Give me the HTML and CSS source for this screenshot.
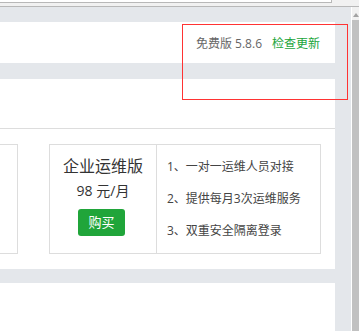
FILE: index.html
```html
<!DOCTYPE html>
<html lang="zh-CN">
<head>
    <meta charset="UTF-8">
    <meta name="viewport" content="width=device-width, initial-scale=1.0">
    <title>软件商店</title>
    <link rel="stylesheet" href="styles.css">
</head>
<body>
    <div class="chrome"><div class="address"></div></div>

    <div class="window">
        <div class="page">
            <div class="panel-head">
                <span class="version">免费版 5.8.6</span>
                <a class="check-update" href="#">检查更新</a>
            </div>

            <div class="panel-plans">
                <div class="plans-title"></div>
                <div class="plans-row">
                    <!-- previous plan, scrolled out of view -->
                    <div class="plan plan-prev"></div>
                    <div class="plan">
                        <div class="plan-info">
                            <div class="plan-name">企业运维版</div>
                            <div class="plan-price">98 元/月</div>
                            <a class="buy-btn" href="#">购买</a>
                        </div>
                        <ul class="plan-list">
                            <li>1、一对一运维人员对接</li>
                            <li>2、提供每月3次运维服务</li>
                            <li>3、双重安全隔离登录</li>
                        </ul>
                    </div>
                </div>
            </div>

            <div class="panel-foot"></div>
        </div>

        <div class="scrollbar">
            <div class="scroll-up"></div>
            <div class="scroll-thumb"></div>
        </div>
    </div>

    <!-- highlight box drawn over the version area -->
    <div class="mark"></div>
</body>
</html>
```

FILE: styles.css
```css
body {
    margin: 0;
    padding: 0;
    height: 331px;
    overflow: hidden;
    font-family: 'Open Sans', 'Noto Sans CJK SC', sans-serif;
    background-color: #e4e7eb;
    color: #333;
}

.chrome {
    height: 7px;
    background-color: #f1f1f1;
    border-bottom: 1px solid #b8b8b8;
    box-sizing: border-box;
}

.address {
    width: 331px;
    height: 2px;
    border-bottom: 1px solid #b8b8b8;
    border-right: 1px solid #b8b8b8;
    background-color: #fff;
}

.window {
    display: flex;
    height: 324px;
}

.page {
    width: 336px;
    padding-top: 15px;
    display: flex;
    flex-direction: column;
}

.panel-head {
    height: 41px;
    background-color: #fff;
    display: flex;
    justify-content: flex-end;
    align-items: center;
    padding-right: 15px;
    font-size: 12px;
}

.version {
    color: #666;
}

.check-update {
    color: #20a53a;
    text-decoration: none;
    margin-left: 10px;
}

.panel-plans {
    margin-top: 16px;
    background-color: #fff;
}

.plans-title {
    height: 49px;
    border-bottom: 1px solid #ddd;
}

.plans-row {
    display: flex;
    gap: 31px;
    padding: 15px 0 15px 0;
}

.plan {
    display: flex;
    flex-shrink: 0;
    width: 272px;
    height: 110px;
    box-sizing: border-box;
    border: 1px solid #ddd;
}

.plan-prev {
    margin-left: -254px;
}

.plan-info {
    width: 107px;
    flex-shrink: 0;
    box-sizing: border-box;
    border-right: 1px solid #ddd;
    text-align: center;
    padding-top: 9px;
}

.plan-name {
    font-size: 16px;
    line-height: 24px;
}

.plan-price {
    font-size: 14px;
    line-height: 26px;
}

.buy-btn {
    display: inline-block;
    margin-top: 5px;
    margin-right: 3px;
    width: 47px;
    height: 27px;
    line-height: 27px;
    border-radius: 3px;
    background-color: #20a53a;
    color: #fff;
    font-size: 13px;
    text-decoration: none;
}

.plan-list {
    list-style: none;
    margin: 0;
    padding: 6px 0 0 10px;
    font-size: 12px;
    line-height: 32px;
    color: #444;
}

.panel-foot {
    flex: 1;
    margin-top: 14px;
    background-color: #fff;
}

.scrollbar {
    margin-left: 16px;
    width: 7px;
    border-left: 1px solid #fff;
    display: flex;
    flex-direction: column;
}

.scroll-up {
    height: 13px;
    background-color: #f1f1f1;
    position: relative;
}

.scroll-up::after {
    content: '';
    position: absolute;
    left: 1px;
    top: 6px;
    border-left: 3px solid transparent;
    border-right: 3px solid transparent;
    border-bottom: 4px solid #a3a3a3;
}

.scroll-thumb {
    flex: 1;
    background-color: #c1c1c1;
}

.mark {
    position: absolute;
    left: 182px;
    top: 24px;
    width: 166px;
    height: 76px;
    box-sizing: border-box;
    border: 1px solid #ff3333;
}
```
